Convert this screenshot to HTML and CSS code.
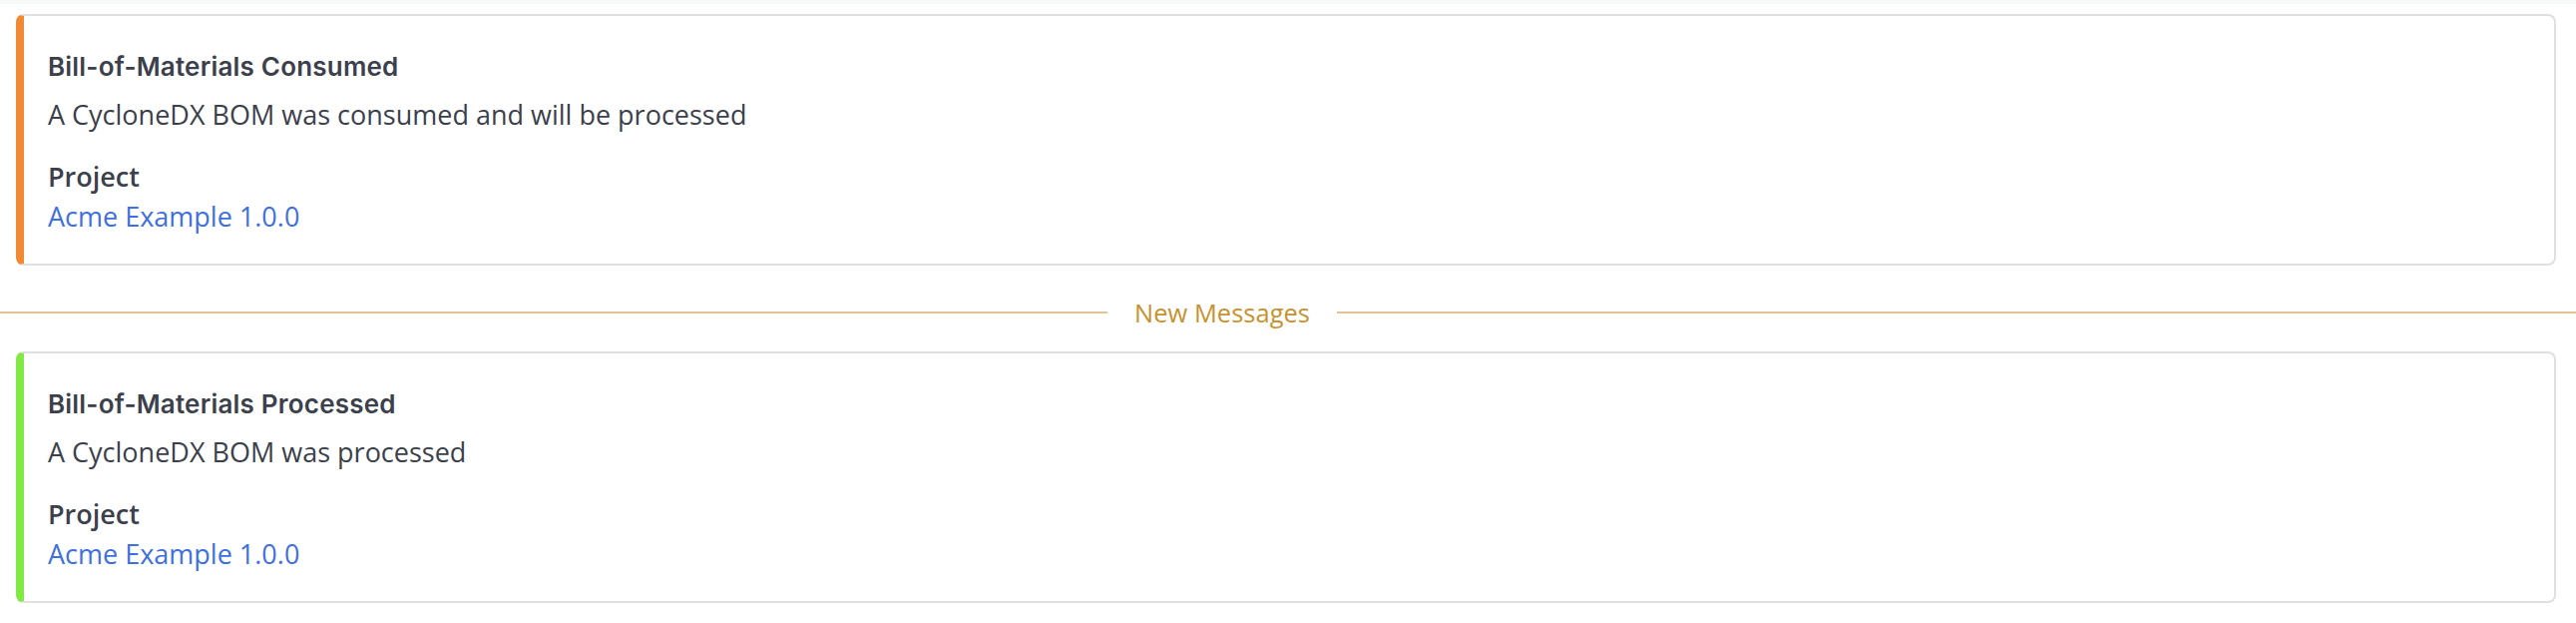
FILE: index.html
```html
<!DOCTYPE html>
<html>
<head>
<meta charset="utf-8">
<link rel="stylesheet" href="styles.css">
</head>
<body>
<div class="page">
  <div class="card card-orange">
    <div class="title">Bill-of-Materials Consumed</div>
    <div class="desc">A CycloneDX BOM was consumed and will be processed</div>
    <div class="label">Project</div>
    <a class="link" href="#">Acme Example 1.0.0</a>
  </div>
  <div class="divider">
    <span class="line line-left"></span>
    <span class="divider-text">New Messages</span>
    <span class="line line-right"></span>
  </div>
  <div class="card card-green">
    <div class="title">Bill-of-Materials Processed</div>
    <div class="desc">A CycloneDX BOM was processed</div>
    <div class="label">Project</div>
    <a class="link" href="#">Acme Example 1.0.0</a>
  </div>
</div>
</body>
</html>
```

FILE: styles.css
```css
html, body {
  margin: 0;
  padding: 0;
  background: #f7f8f8;
}
.page {
  margin-top: 4px;
  background: #ffffff;
  min-height: 620px;
  padding-top: 10px;
  font-family: "Open Sans", "Liberation Sans", sans-serif;
  color: #3c3f4c;
}
.card {
  margin: 0 20px 0 16px;
  border: 2px solid #e0e0e0;
  border-left: 8px solid #f08a35;
  border-radius: 8px;
  background: #fff;
  padding: 35px 24px 27px 24px;
  display: flex;
  flex-direction: column;
  align-items: flex-start;
}
.card-orange { border-left-color: #f08a35; }
.card-green { border-left-color: #82e843; }
.title {
  font-family: Inter, "Liberation Sans", sans-serif;
  font-weight: 600;
  font-size: 26px;
  line-height: 32px;
  letter-spacing: 0.2px;
  color: #3c3f4c;
}
.desc {
  font-size: 27px;
  line-height: 40px;
  margin-top: 12px;
}
.label {
  font-size: 27px;
  font-weight: 600;
  line-height: 40px;
  margin-top: 22px;
}
.link {
  font-size: 27px;
  line-height: 40px;
  color: #3f70e0;
  text-decoration: none;
}
.divider {
  display: flex;
  align-items: center;
  margin: 27px 0 19px 0;
  height: 40px;
}
.line {
  height: 2px;
  background: #e3c38e;
}
.line-left { flex: 0 0 1110px; }
.line-right { flex: 1 1 auto; }
.divider-text {
  margin: 0 27px;
  font-size: 25.5px;
  line-height: 40px;
  color: #c8922f;
  white-space: nowrap;
}
```
